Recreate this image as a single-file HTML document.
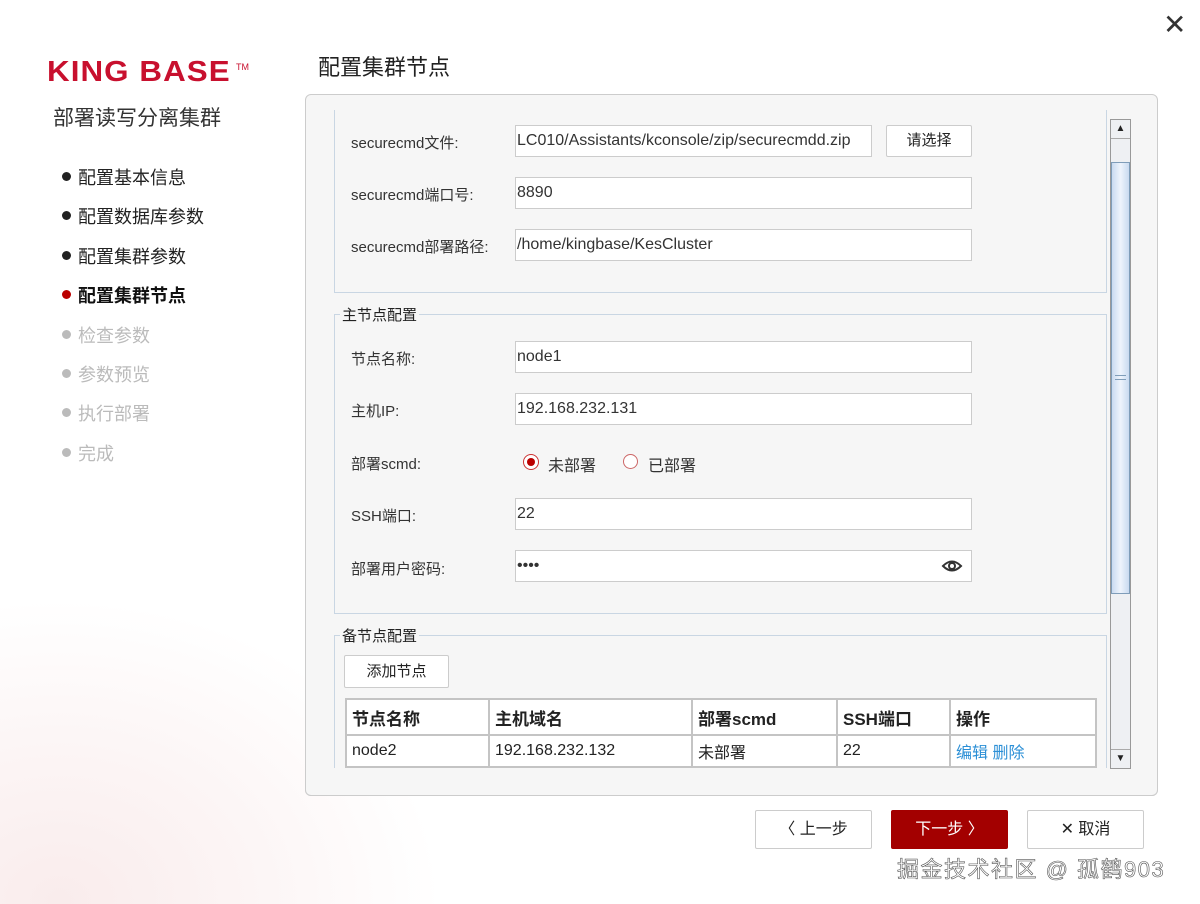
<!DOCTYPE html>
<html><head><meta charset="utf-8"><style>
*{box-sizing:border-box;margin:0;padding:0}
body{width:1200px;height:904px;position:relative;overflow:hidden;font-family:"Liberation Sans","Noto Sans CJK SC",sans-serif;color:#222;
background:radial-gradient(ellipse 380px 300px at 60px 900px,#f9ecec 0%,#fcf5f5 50%,rgba(255,255,255,0) 100%),#fff;}
.a{position:absolute}
.logo{left:47px;top:56px;font-size:29px;font-weight:bold;color:#c8102e;letter-spacing:1px;font-family:"Liberation Sans",sans-serif;transform:scaleX(1.08);transform-origin:left}
.tm{left:236px;top:62px;font-size:9px;color:#c8102e}
.sub{left:53px;top:102px;font-size:21px;color:#333}
.step{left:62px;font-size:18px;color:#222}
.step i{display:inline-block;width:9px;height:9px;border-radius:50%;background:#222;margin-right:7px;vertical-align:3px}
.g{color:#bbb}.g i{background:#bbb}
.title{left:318px;top:50px;font-size:22px;color:#222}
.panel{left:305px;top:94px;width:853px;height:702px;border:1px solid #ccc;border-radius:6px;background:#f6f6f6}
.fs{border:1px solid #c9d6e3;}
.lg{font-size:15px;background:#f6f6f6;padding:0 2px;color:#222}
.lbl{font-size:15px;color:#333}
.in{height:32px;width:457px;left:515px;background:#fff;border:1px solid #ccc;font-size:16px;line-height:30px;padding-left:1px;color:#333;overflow:hidden;white-space:nowrap}
.btn{background:#fff;border:1px solid #ccc;font-size:15px;text-align:center;border-radius:2px}
table{border-collapse:collapse;position:absolute;left:345px;top:698px;width:752px;background:#fff;font-size:16px}
td{border:2px solid #c4c4c4;height:32px;padding-left:5px}
th{border:2px solid #c4c4c4;height:36px;text-align:left;padding-left:5px;font-weight:bold;font-size:17px}
</style></head><body>
<div class="a logo">KING BASE</div><div class="a tm">TM</div>
<div class="a sub">部署读写分离集群</div>
<div class="a step" style="top:164px"><i></i>配置基本信息</div>
<div class="a step" style="top:203px"><i></i>配置数据库参数</div>
<div class="a step" style="top:243px"><i></i>配置集群参数</div>
<div class="a step" style="top:282px;font-weight:bold;color:#111"><i style="background:#b00"></i>配置集群节点</div>
<div class="a step g" style="top:322px"><i></i>检查参数</div>
<div class="a step g" style="top:361px"><i></i>参数预览</div>
<div class="a step g" style="top:400px"><i></i>执行部署</div>
<div class="a step g" style="top:440px"><i></i>完成</div>
<div class="a" style="left:1163px;top:8px;font-size:28px;color:#333">✕</div>
<div class="a title">配置集群节点</div>
<div class="a panel"></div>
<div class="a fs" style="left:334px;top:110px;width:773px;height:183px;border-top:none"></div>
<div class="a lbl" style="left:351px;top:132px">securecmd文件:</div>
<div class="a in" style="top:125px;width:357px">LC010/Assistants/kconsole/zip/securecmdd.zip</div>
<div class="a btn" style="left:886px;top:125px;width:86px;height:32px;line-height:30px">请选择</div>
<div class="a lbl" style="left:351px;top:184px">securecmd端口号:</div>
<div class="a in" style="top:177px">8890</div>
<div class="a lbl" style="left:351px;top:236px">securecmd部署路径:</div>
<div class="a in" style="top:229px">/home/kingbase/KesCluster</div>
<div class="a fs" style="left:334px;top:314px;width:773px;height:300px"></div>
<div class="a lg" style="left:340px;top:304px">主节点配置</div>
<div class="a lbl" style="left:351px;top:348px">节点名称:</div>
<div class="a in" style="top:341px">node1</div>
<div class="a lbl" style="left:351px;top:400px">主机IP:</div>
<div class="a in" style="top:393px">192.168.232.131</div>
<div class="a lbl" style="left:351px;top:453px">部署scmd:</div>
<div class="a" style="left:523px;top:454px;width:16px;height:16px;border:1px solid #c33;border-radius:50%;background:#fff"><div class="a" style="left:3px;top:3px;width:8px;height:8px;border-radius:50%;background:#b00"></div></div>
<div class="a lbl" style="left:548px;top:452px;font-size:16px">未部署</div>
<div class="a" style="left:623px;top:454px;width:15px;height:15px;border:1px solid #c66;border-radius:50%;background:#fff"></div>
<div class="a lbl" style="left:648px;top:452px;font-size:16px">已部署</div>
<div class="a lbl" style="left:351px;top:505px">SSH端口:</div>
<div class="a in" style="top:498px">22</div>
<div class="a lbl" style="left:351px;top:558px">部署用户密码:</div>
<div class="a in" style="top:550px">••••</div>
<svg class="a" style="left:941px;top:556px" width="22" height="20" viewBox="0 0 22 20"><path d="M2 10 Q11 1 20 10 Q11 19 2 10Z" fill="none" stroke="#333" stroke-width="2"/><circle cx="11" cy="10" r="3" fill="none" stroke="#333" stroke-width="2"/></svg>
<div class="a fs" style="left:334px;top:635px;width:773px;height:140px;border-bottom:none"></div>
<div class="a lg" style="left:340px;top:625px">备节点配置</div>
<div class="a btn" style="left:344px;top:655px;width:105px;height:33px;line-height:32px">添加节点</div>
<table><tr><th style="width:143px">节点名称</th><th style="width:203px">主机域名</th><th style="width:145px">部署scmd</th><th style="width:113px">SSH端口</th><th>操作</th></tr>
<tr><td>node2</td><td>192.168.232.132</td><td>未部署</td><td>22</td><td style="color:#2b8fd6">编辑 删除</td></tr></table>
<div class="a" style="left:305px;top:768px;width:853px;height:28px;background:#f6f6f6;border-radius:0 0 6px 6px;border:1px solid #ccc;border-top:none"></div>
<div class="a" style="left:1110px;top:119px;width:21px;height:650px;border:1px solid #999;background:#eef0f3"></div>
<div class="a" style="left:1111px;top:120px;width:19px;height:19px;border-bottom:1px solid #aaa;text-align:center;font-size:10px;line-height:18px">▲</div>
<div class="a" style="left:1111px;top:162px;width:19px;height:432px;border:1px solid #7f9db9;background:linear-gradient(90deg,#c9daf0,#eef4fc 50%,#c9daf0)"></div>
<div class="a" style="left:1115px;top:375px;width:11px;height:5px;border-top:1px solid #7f9db9;border-bottom:1px solid #7f9db9"></div>
<div class="a" style="left:1111px;top:749px;width:19px;height:19px;border-top:1px solid #aaa;text-align:center;font-size:10px;line-height:18px">▼</div>
<div class="a btn" style="left:755px;top:810px;width:117px;height:39px;line-height:37px;font-size:16px">〈 上一步</div>
<div class="a btn" style="left:891px;top:810px;width:117px;height:39px;line-height:37px;font-size:16px;background:#a30000;border-color:#a30000;color:#fff">下一步 〉</div>
<div class="a btn" style="left:1027px;top:810px;width:117px;height:39px;line-height:37px;font-size:16px">✕ 取消</div>
<div class="a" style="left:897px;top:852px;font-size:22px;color:#fff;-webkit-text-stroke:0.6px #555;letter-spacing:1.5px;font-weight:normal">掘金技术社区 @ 孤鹤903</div>
</body></html>
